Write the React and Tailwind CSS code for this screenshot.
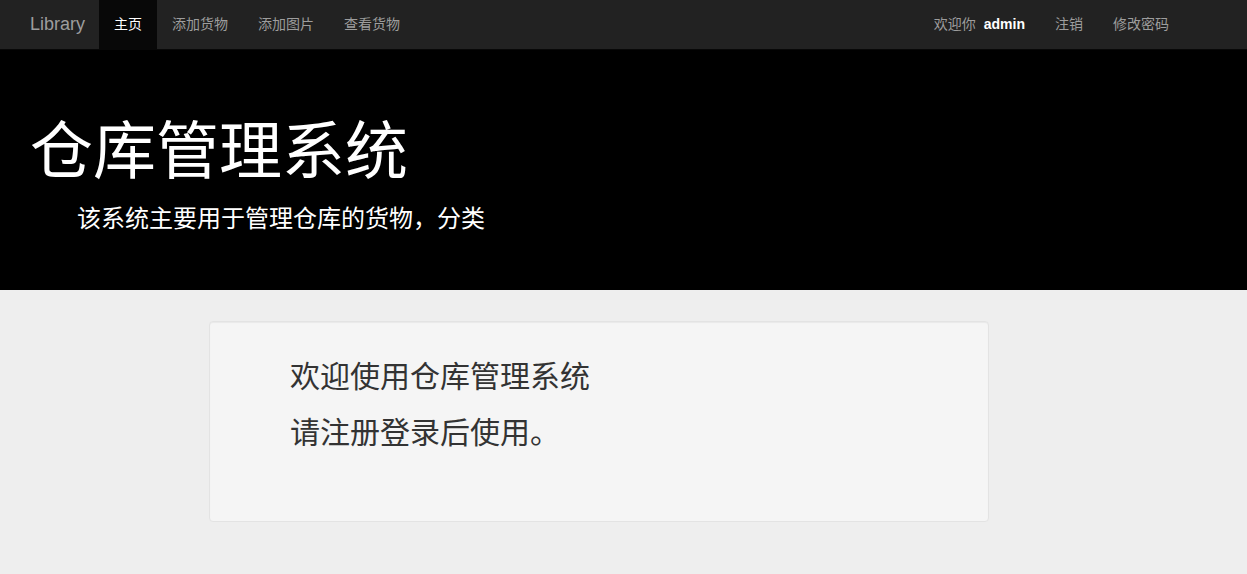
export default function App() {
    const links = ['添加货物', '添加图片', '查看货物']

    return (
        <div
            className="min-h-[574px] bg-[#eeeeee]"
            style={{ fontFamily: '"Liberation Sans", "Noto Sans CJK SC", sans-serif' }}
        >
            {/*Navbar*/}
            <nav className="flex h-[50px] items-stretch border-b border-[#080808] bg-[#222222] pl-[15px] pr-[63px] text-[14px] text-[#9d9d9d]">
                <a className="flex items-center pl-[15px] pr-[14px] text-[18px]">Library</a>
                <a className="flex items-center bg-[#080808] px-[15px] text-white">主页</a>
                {links.map((l) => (
                    <a key={l} className="flex items-center px-[15px]">
                        {l}
                    </a>
                ))}
                <div className="ml-auto flex items-stretch">
                    <span className="flex items-center px-[15px]">
                        欢迎你
                        <b className="ml-2 text-white">admin</b>
                    </span>
                    <a className="flex items-center px-[15px]">注销</a>
                    <a className="flex items-center px-[15px]">修改密码</a>
                </div>
            </nav>

            {/*Jumbotron*/}
            <div className="h-[240px] bg-black pl-[30px] pt-[67px] text-white">
                <h1 className="text-[63px] leading-[1.1]">仓库管理系统</h1>
                <p className="mt-[15px] pl-[47px] text-[24px] leading-[36px]">
                    该系统主要用于管理仓库的货物，分类
                </p>
            </div>

            {/*Well*/}
            <div className="ml-[209px] mt-[31px] w-[780px] rounded border border-[#e3e3e3] bg-[#f5f5f5] pb-[60px] pl-[80px] pt-[27px] text-[30px] leading-[56px] text-[#333333] shadow-[inset_0_1px_1px_rgba(0,0,0,0.05)]">
                <p>欢迎使用仓库管理系统</p>
                <p>请注册登录后使用。</p>
            </div>
        </div>
    )
}
